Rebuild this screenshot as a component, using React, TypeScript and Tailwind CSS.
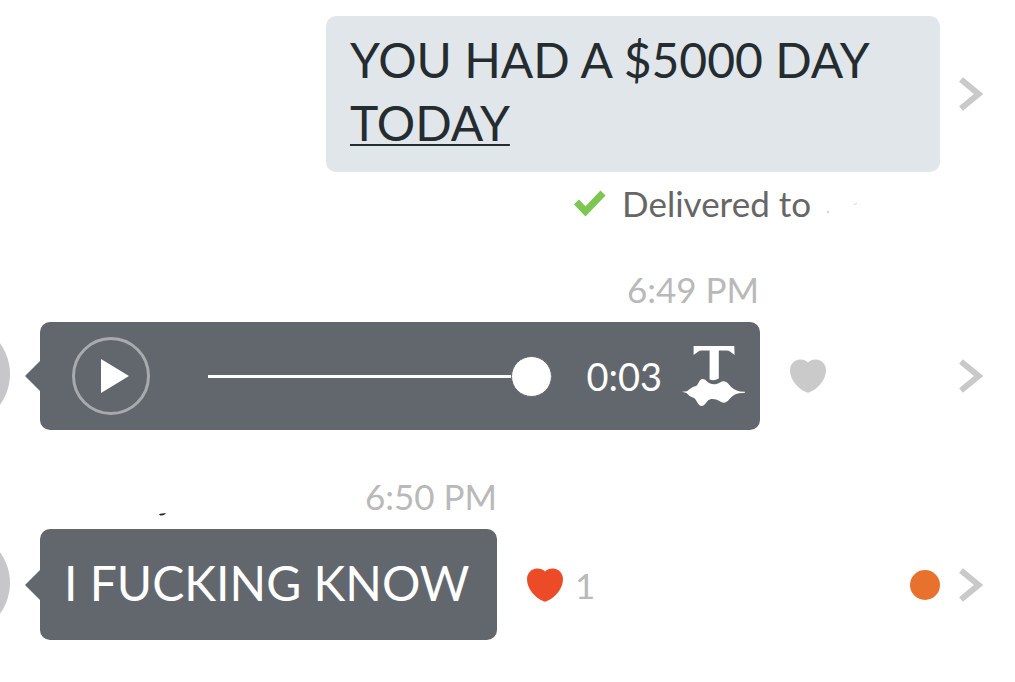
import type { ReactNode } from "react";

function Chevron({ label }: { label: string }) {
  return (
    <button type="button" aria-label={label} className="shrink-0">
      <svg width="24" height="34" viewBox="0 0 24 34" fill="none" stroke="#c9c9c9" strokeWidth="6">
        <path d="M2 2.500 19.500 17 2 31.500" />
      </svg>
    </button>
  );
}

function Heart({ color }: { color: string }) {
  return (
    <svg width="36" height="34" viewBox="0 0 36 34" fill={color}>
      <path d="M18 3.6C20 1.3 23 .2 26 .4 31.600 .6 36 5 36 11.200 36 21 28 29.500 19.500 33.300Q18 34 16.500 33.300C8 29.500 0 21 0 11.200 0 5 4.400 .6 10 .4 13 .2 16 1.300 18 3.600Z" />
    </svg>
  );
}

function Transcribe() {
  return (
    <svg width="64" height="62" viewBox="0 0 64 62" fill="#fff">
      <path d="M11.600 1H52.300L52.600 10 48 6.600Q46.500 5.600 44.500 5.600H36.800V33.600Q32 36.200 27.600 34.400V5.600H19.500Q17.500 5.600 16 6.800L11.600 10Z" />
      <path d="M0 46.800 5 46.200C8 43.500 10.500 42 14 41 16.500 40 17 34.500 20 34 23.500 33.500 25 37 27.500 38.200 31 40 35 39.500 38 37.500 41 35.500 44 36 46.500 39 50 43.500 53.500 45.600 58 46.400L63 46.800V47.700L57 48.200C53 49 50 51 47.500 54 44 58.500 41 58.500 37.500 56 34 53.500 29 53.300 26.500 55 24 57.500 22.500 61 19.500 61 16 61 15 55 12 53 8.500 52 6.500 50 4.500 48Z" />
    </svg>
  );
}

function IncomingRow({ bubble, after, end }: { bubble: ReactNode; after: ReactNode; end: ReactNode }) {
  return (
    <div className="flex items-center pr-8">
      <div className="mb-1 -ml-[94px] size-[104px] shrink-0 rounded-full bg-[#c7c7cb]" />
      <svg className="ml-[15px] shrink-0" width="15" height="30" viewBox="0 0 15 30" fill="#62676d">
        <path d="M15 0V30L0 15Z" />
      </svg>
      {bubble}
      <div className="ml-[30px] flex items-center gap-3">{after}</div>
      <div className="ml-auto flex items-center gap-[19px]">{end}</div>
    </div>
  );
}

export default function App() {
  return (
    <main className="overflow-hidden bg-white pt-4 pb-10 font-['Lato','Open_Sans',sans-serif]">
      <section>
        <div className="flex items-center justify-end gap-[19px] pr-8">
          <p className="w-[614px] rounded-[10px] bg-[#e1e6ea] px-6 pt-3 pb-[18px] text-[48px] leading-[63px] text-[#252c30]">
            YOU HAD A $5000 DAY{" "}
            <span className="underline decoration-2 underline-offset-[3px]">TODAY</span>
          </p>
          <Chevron label="Open sent message" />
        </div>
        <div className="mt-[11px] flex items-center justify-end gap-4 pr-[156px] text-[35px] leading-10 text-[#666]">
          <svg width="32" height="27" viewBox="0 0 32 27" fill="none" stroke="#7cc651" strokeWidth="7">
            <path d="M2.500 12 11.500 21.500 29 3" />
          </svg>
          <span>Delivered to</span>
          <svg className="mt-2" width="32" height="12" viewBox="0 0 32 12" fill="#d5d5d5">
            <path d="M0 10h2v2H0zM27 3l3-1v1l-3 1z" />
          </svg>
        </div>
      </section>

      <section className="mt-[46px]">
        <time className="block w-[759px] text-right text-[35px] leading-10 text-[#b9b9b9]">6:49 PM</time>
        <div className="mt-[13px]">
          <IncomingRow
            bubble={
              <div className="flex h-[108px] w-[720px] items-center rounded-[10px] bg-[#62676d] pr-[14px] pl-8">
                <button
                  type="button"
                  aria-label="Play voice message"
                  className="flex size-[78px] shrink-0 items-center justify-center rounded-full border-3 border-[#a7abae] pl-2"
                >
                  <svg width="28" height="34" viewBox="0 0 28 34" fill="#fff">
                    <path d="M0 0 28 17 0 34Z" />
                  </svg>
                </button>
                <input
                  type="range"
                  aria-label="Playback position"
                  min={0}
                  max={3}
                  defaultValue={3}
                  className="ml-[58px] h-10 w-0 flex-1 appearance-none bg-transparent [&::-webkit-slider-runnable-track]:h-[3px] [&::-webkit-slider-runnable-track]:bg-white [&::-webkit-slider-thumb]:-mt-[19px] [&::-webkit-slider-thumb]:size-[41px] [&::-webkit-slider-thumb]:appearance-none [&::-webkit-slider-thumb]:rounded-full [&::-webkit-slider-thumb]:border [&::-webkit-slider-thumb]:border-[#62676d] [&::-webkit-slider-thumb]:bg-white"
                />
                <span className="ml-[34px] text-[38px] leading-10 text-white">0:03</span>
                <button type="button" aria-label="Transcribe" className="ml-5 shrink-0">
                  <Transcribe />
                </button>
              </div>
            }
            after={
              <button type="button" aria-label="Like">
                <Heart color="#cacaca" />
              </button>
            }
            end={<Chevron label="Open voice message" />}
          />
        </div>
      </section>

      <section className="mt-[46px]">
        <div className="relative w-[497px]">
          <time className="block text-right text-[35px] leading-10 text-[#b9b9b9]">6:50 PM</time>
          <svg className="absolute bottom-0 left-[159px]" width="8" height="3" viewBox="0 0 8 3" fill="#222">
            <path d="M0 1 7 0Q6 1.500 4 2.300L1 2.500Z" />
          </svg>
        </div>
        <div className="mt-[13px]">
          <IncomingRow
            bubble={
              <p className="w-[457px] rounded-[10px] bg-[#62676d] pt-[22px] pb-[26px] pl-6 text-[48px] leading-[63px] whitespace-nowrap text-white">
                I FUCKING KNOW
              </p>
            }
            after={
              <>
                <button type="button" aria-label="Unlike">
                  <Heart color="#eb4b27" />
                </button>
                <span className="text-[35px] leading-10 text-[#b9b9b9]">1</span>
              </>
            }
            end={
              <>
                <span className="size-[30px] rounded-full bg-[#e9712e]" />
                <Chevron label="Open message" />
              </>
            }
          />
        </div>
      </section>
    </main>
  );
}
